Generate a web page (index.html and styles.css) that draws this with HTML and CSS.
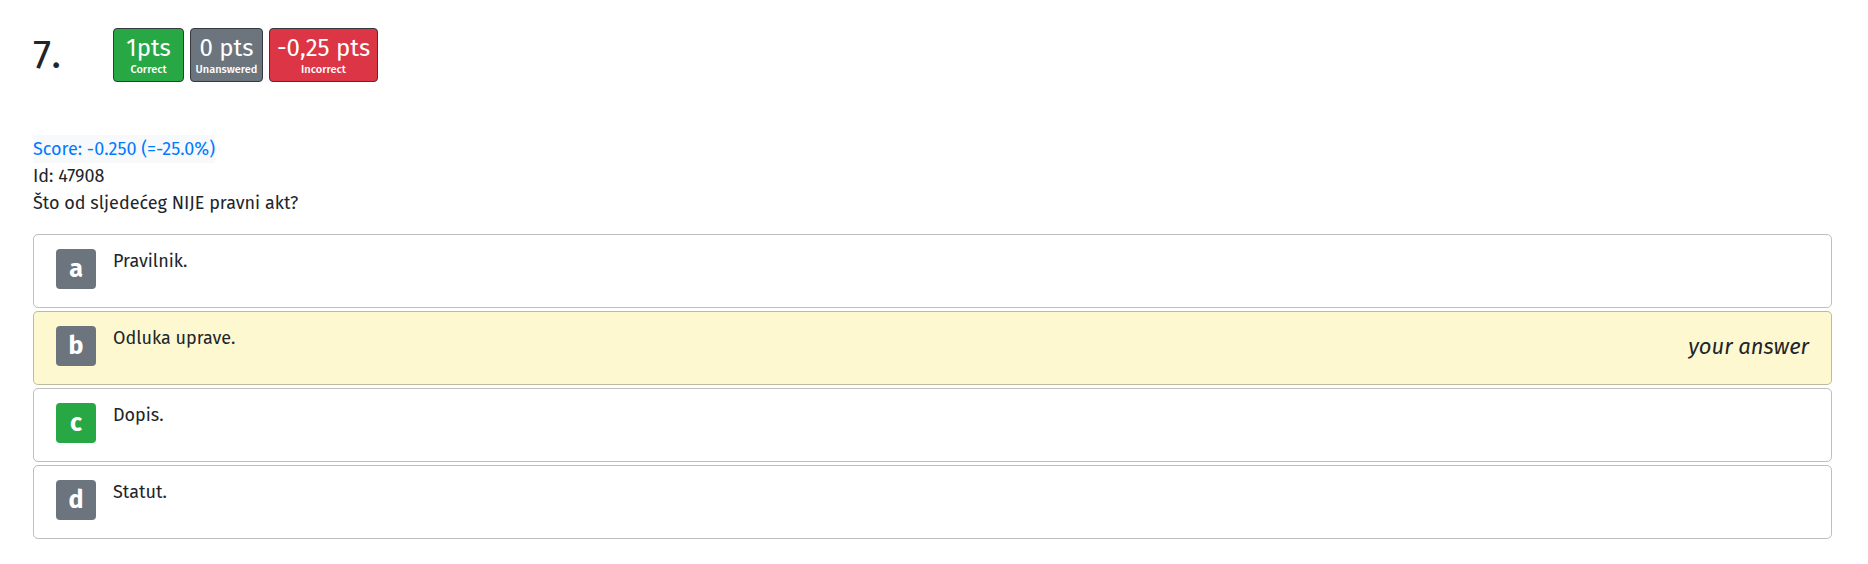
FILE: index.html
```html
<!DOCTYPE html>
<html>
<head>
<meta charset="utf-8">
<link rel="stylesheet" href="styles.css">
</head>
<body>
<div class="question">
  <div class="q-head">
    <div class="q-num">7.</div>
    <div class="pts-list">
      <div class="pts pts-correct"><div class="pts-val">1pts</div><div class="pts-lbl">Correct</div></div>
      <div class="pts pts-unanswered"><div class="pts-val">0 pts</div><div class="pts-lbl">Unanswered</div></div>
      <div class="pts pts-incorrect"><div class="pts-val">-0,25 pts</div><div class="pts-lbl">Incorrect</div></div>
    </div>
  </div>
  <div class="q-meta">
    <div><span class="score">Score: -0.250 (=-25.0%)</span></div>
    <div>Id: 47908</div>
    <div>Što od sljedećeg NIJE pravni akt?</div>
  </div>
  <div class="answers">
    <div class="answer"><span class="letter">a</span><span class="a-text">Pravilnik.</span></div>
    <div class="answer answer-selected"><span class="letter">b</span><span class="a-text">Odluka uprave.</span><span class="your">your answer</span></div>
    <div class="answer"><span class="letter letter-correct">c</span><span class="a-text">Dopis.</span></div>
    <div class="answer"><span class="letter">d</span><span class="a-text">Statut.</span></div>
  </div>
</div>
</body>
</html>
```

FILE: styles.css
```css
html, body {
  margin: 0;
  padding: 0;
  background: #fff;
}
body {
  font-family: "Fira Sans", "Open Sans", "Noto Sans", sans-serif;
  color: #212529;
}
.question {
  padding: 28px 36px 0 33px;
}
.q-head {
  display: flex;
  align-items: center;
}
.q-num {
  width: 80px;
  font-size: 41px;
  line-height: 54px;
  color: #212529;
}
.pts-list {
  display: flex;
  gap: 6px;
}
.pts {
  height: 52px;
  border: 1px solid #343a40;
  border-radius: 4px;
  color: #fff;
  text-align: center;
  padding: 0 4px;
  box-sizing: content-box;
}
.pts-correct { background: #28a745; min-width: 61px; }
.pts-unanswered { background: #6c757d; min-width: 63px; }
.pts-incorrect { background: #dc3545; min-width: 99px; }
.pts-val {
  font-size: 24px;
  line-height: 30px;
  padding-top: 4px;
}
.pts-lbl {
  font-size: 11px;
  font-weight: 500;
  line-height: 14px;
}
.q-meta {
  margin-top: 53px;
  font-size: 18px;
  line-height: 27px;
}
.score {
  color: #007bff;
  background: #f8f9fb;
  display: inline-block;
  line-height: 28px;
}
.answers {
  margin-top: 17px;
  display: flex;
  flex-direction: column;
  gap: 3px;
}
.answer {
  display: flex;
  align-items: flex-start;
  border: 1px solid rgba(0,0,0,0.25);
  border-radius: 5px;
  padding: 14px 22px 0 22px;
  box-sizing: border-box;
  height: 74px;
}
.answer-selected {
  background: #fef8d1;
}
.letter {
  width: 40px;
  height: 40px;
  border-radius: 4px;
  background: #6c757d;
  color: #fff;
  font-weight: bold;
  font-size: 25px;
  line-height: 40px;
  text-align: center;
  flex: none;
}
.letter-correct {
  background: #28a745;
}
.a-text {
  margin-left: 17px;
  font-size: 18px;
  line-height: 24px;
  color: #212529;
}
.your {
  margin-left: auto;
  font-style: italic;
  font-size: 22px;
  line-height: 42px;
  color: #212529;
}
```
